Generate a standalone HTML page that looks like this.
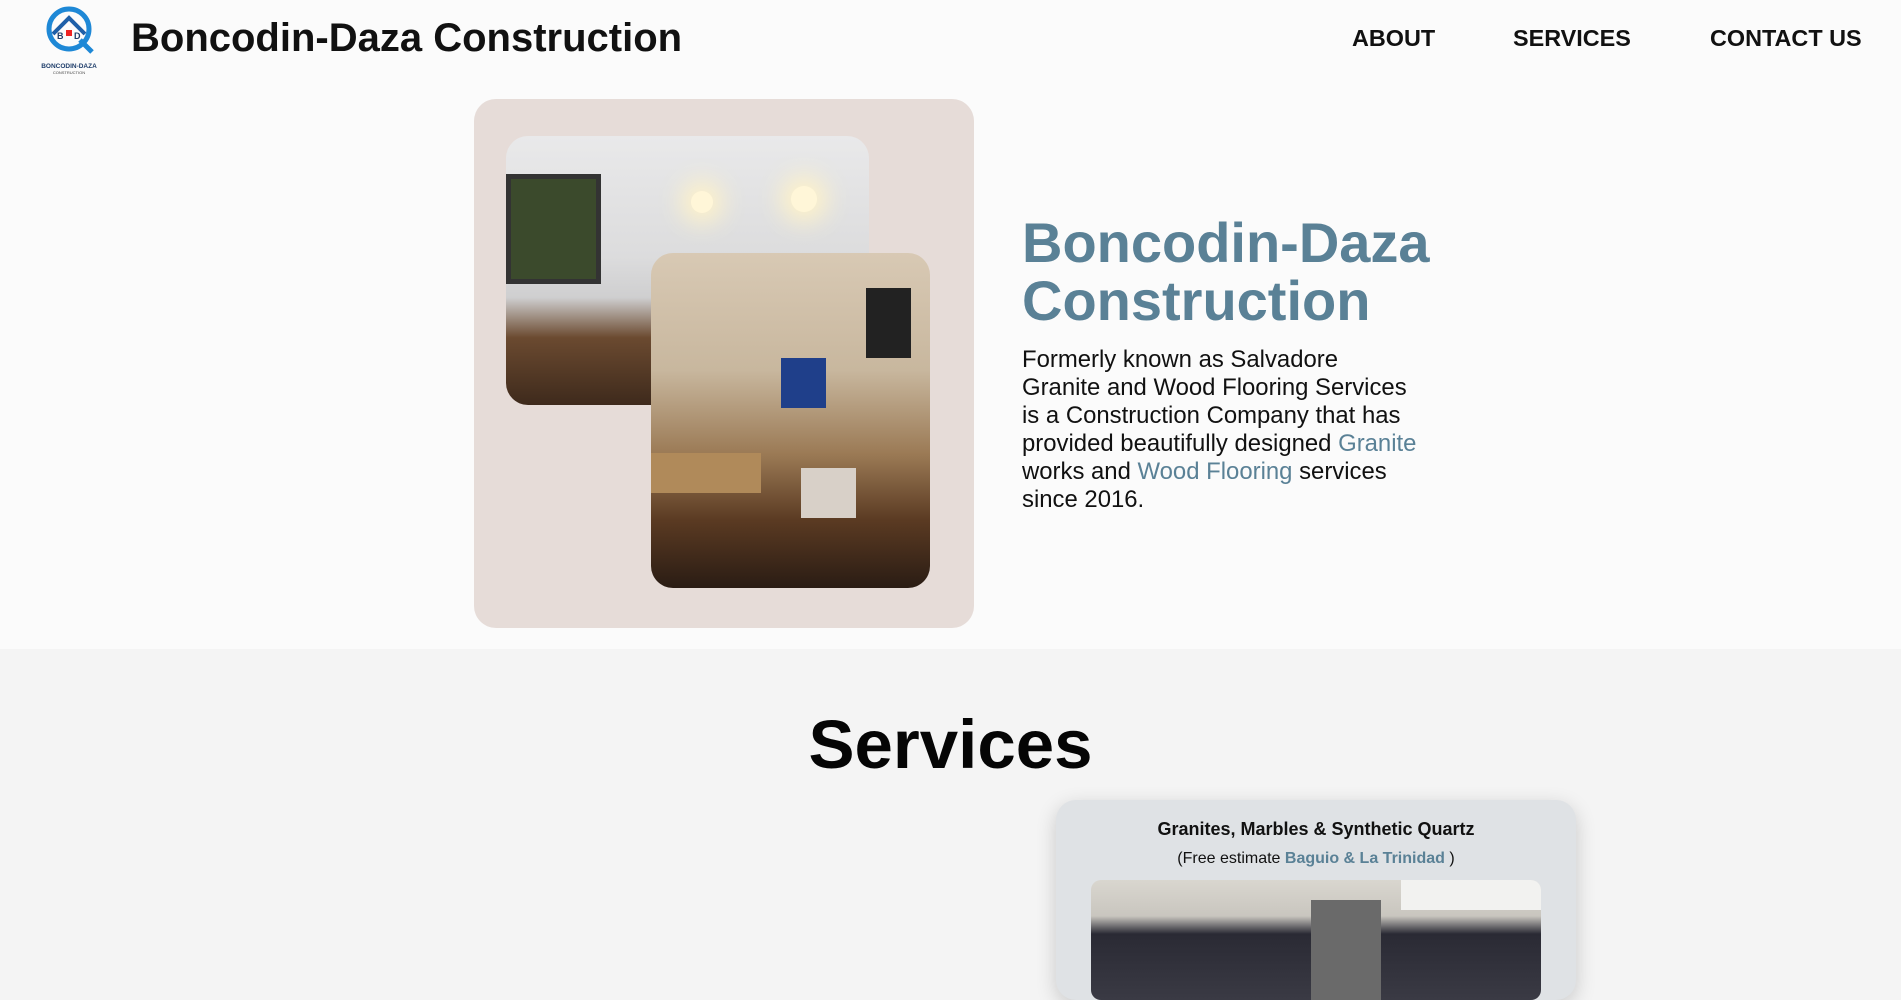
<!DOCTYPE html>
<html><head><meta charset="utf-8"><style>
*{margin:0;padding:0;box-sizing:border-box}
body{width:1901px;height:938px;overflow:hidden;font-family:"Liberation Sans",Arial,sans-serif;background:#f4f4f4;position:relative}
.hero{position:absolute;left:0;top:0;width:1901px;height:649px;background:#fbfbfb}
.abs{position:absolute}
.nav a{position:absolute;top:25px;font-size:23.4px;font-weight:bold;color:#111;text-decoration:none}
.card{left:474px;top:99px;width:500px;height:529px;background:#e6dcd8;border-radius:22px}
.img1{left:506px;top:136px;width:363px;height:269px;border-radius:22px;overflow:hidden;
background:linear-gradient(180deg,#e9e9ea 0%,#dcdcdd 45%,#cfcfd0 60%,#6b4a30 75%,#3e2a1c 100%)}
.img2{left:651px;top:253px;width:279px;height:335px;border-radius:22px;overflow:hidden;
background:linear-gradient(180deg,#d8c9b4 0%,#c8b79e 35%,#9b7a55 60%,#5a3a22 80%,#2a1c14 100%)}
h1{position:absolute;left:1022px;top:214px;font-size:56px;line-height:58px;color:#5a8196;font-weight:bold}
p.d{position:absolute;left:1022px;top:346px;width:400px;font-size:23.9px;line-height:28px;color:#111}
p.d span{color:#5a8196}
.svc{position:absolute;left:0;width:1901px;top:705px;text-align:center;font-size:69px;font-weight:bold;color:#050505}
.scard{left:1056px;top:800px;width:520px;height:200px;background:#dfe2e5;border-radius:20px;box-shadow:0 6px 20px rgba(0,0,0,.18);text-align:center}
</style></head><body>
<div class="hero"></div>
<svg class="abs" style="left:40px;top:6px" width="60" height="70" viewBox="0 0 60 70">
<circle cx="29" cy="23" r="20" fill="none" stroke="#1e88d6" stroke-width="5"/>
<path d="M13 28 L29 12 L45 28" fill="none" stroke="#1e5fa8" stroke-width="4"/>
<path d="M40 34 L52 46" stroke="#1e88d6" stroke-width="5"/>
<rect x="26" y="24" width="6" height="6" fill="#e22"/>
<text x="17" y="33" font-size="9" font-weight="bold" fill="#1e3d6a" font-family="Liberation Sans">B</text>
<text x="34" y="33" font-size="9" font-weight="bold" fill="#1e3d6a" font-family="Liberation Sans">D</text>
<text x="29" y="62" font-size="6.5" font-weight="bold" fill="#1e3d6a" text-anchor="middle" font-family="Liberation Sans">BONCODIN-DAZA</text>
<text x="29" y="68" font-size="4" fill="#444" text-anchor="middle" font-family="Liberation Sans">CONSTRUCTION</text>
</svg>
<div class="abs" style="left:131px;top:16px;font-size:40px;font-weight:bold;color:#111">Boncodin-Daza Construction</div>
<div class="nav"><a style="left:1352px">ABOUT</a><a style="left:1513px">SERVICES</a><a style="left:1710px">CONTACT US</a></div>
<div class="abs card"></div>
<div class="abs img1">
<div class="abs" style="left:0;top:38px;width:95px;height:110px;background:#3b4a2c;border:5px solid #333"></div>
<div class="abs" style="left:185px;top:55px;width:22px;height:22px;border-radius:50%;background:#fff6d8;box-shadow:0 0 25px 10px #fff3c8"></div>
<div class="abs" style="left:285px;top:50px;width:26px;height:26px;border-radius:50%;background:#fff6d8;box-shadow:0 0 25px 10px #fff3c8"></div>
</div>
<div class="abs img2">
<div class="abs" style="left:215px;top:35px;width:45px;height:70px;background:#222"></div>
<div class="abs" style="left:130px;top:105px;width:45px;height:50px;background:#1f3f8a"></div>
<div class="abs" style="left:150px;top:215px;width:55px;height:50px;background:#d8d0c8"></div>
<div class="abs" style="left:0;top:200px;width:110px;height:40px;background:#b08a5a"></div>
</div>
<h1>Boncodin-Daza<br>Construction</h1>
<p class="d">Formerly known as Salvadore Granite and Wood Flooring Services is a Construction Company that has provided beautifully designed <span>Granite</span> works and <span>Wood Flooring</span> services since 2016.</p>
<div class="svc">Services</div>
<div class="abs scard">
<div style="margin-top:19px;font-size:18px;font-weight:bold;color:#111">Granites, Marbles &amp; Synthetic Quartz</div>
<div style="margin-top:10px;font-size:16px;color:#111">(Free estimate <b style="color:#5a8196">Baguio &amp; La Trinidad</b> )</div>
<div class="abs" style="left:35px;top:80px;width:450px;height:120px;border-radius:10px;overflow:hidden;background:linear-gradient(180deg,#d9d6cf 0%,#c9c6bf 30%,#2a2a34 45%,#3a3a44 100%)">
<div class="abs" style="left:310px;top:0;width:140px;height:30px;background:#f2f2f0"></div>
<div class="abs" style="left:220px;top:20px;width:70px;height:100px;background:#6a6a6a"></div>
</div>
</div>
</body></html>
